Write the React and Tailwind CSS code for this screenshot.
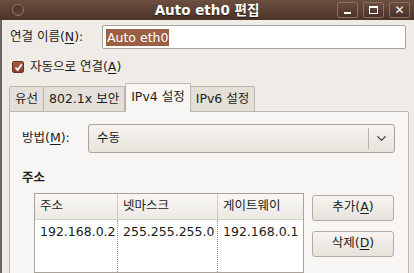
import { ChevronDown } from 'lucide-react'

const FONT = { fontFamily: '"DejaVu Sans", "Noto Sans CJK KR", sans-serif' }

function U({ children }) {
  return <span className="underline underline-offset-2">{children}</span>
}

function WinButton({ children }) {
  return (
    <div className="w-[21px] h-[16px] rounded-[2px] border border-[#8a6e60] bg-gradient-to-b from-[#6a4c3e] to-[#4a3127] flex items-center justify-center text-white">
      {children}
    </div>
  )
}

function Tab({ label, active }) {
  if (active) {
    return (
      <div className="h-[29px] px-[5px] pt-[4px] bg-[#f7f6f4] border border-b-0 border-[#bcb6ae] rounded-t-[2px] -mb-px relative z-10 text-[12.5px] text-[#1c1c1c]">
        {label}
      </div>
    )
  }
  return (
    <div className="h-[25px] px-[5px] pt-[3px] bg-[#e4dfd9] border border-b-0 border-[#bcb6ae] rounded-t-[2px] text-[12.5px] text-[#1c1c1c] -ml-px first:ml-0">
      {label}
    </div>
  )
}

function SideButton({ children }) {
  return (
    <div className="w-[82px] h-[26px] rounded-[3px] border border-[#b3aca4] bg-gradient-to-b from-[#f7f5f2] to-[#e6e1db] flex items-center justify-center text-[12.5px] text-[#1c1c1c]">
      {children}
    </div>
  )
}

export default function App() {
  return (
    <div className="w-[414px] h-[273px] overflow-hidden bg-[#efebe7] text-[#1c1c1c]" style={FONT}>
      <div className="h-[20px] bg-gradient-to-b from-[#6d4f40] to-[#4b3328] flex items-center relative">
        <div className="ml-[12px] w-[12px] h-[12px] rounded-full border border-[#8f7566] bg-gradient-to-b from-[#4e362b] to-[#5e4436]" />
        <div className="absolute inset-0 flex items-center justify-center text-white font-bold text-[13.5px] [text-shadow:0_1px_1px_rgba(0,0,0,0.6)]">
          Auto eth0 편집
        </div>
        <div className="ml-auto mr-[4px] flex gap-[5px]">
          <WinButton>
            <div className="w-[7px] h-[2px] bg-white mt-[6px]" />
          </WinButton>
          <WinButton>
            <div className="w-[9px] h-[8px] border-[1.5px] border-white border-t-[2.5px]" />
          </WinButton>
          <WinButton>
            <span className="text-[12px] font-bold leading-none">✕</span>
          </WinButton>
        </div>
      </div>

      <div className="border-l-2 border-[#6b6561] h-[253px]">
        <div className="flex items-center pt-[5px] pl-[8px]">
          <div className="w-[92px] text-[12.5px]">연결 이름(<U>N</U>):</div>
          <div className="w-[304px] h-[24px] bg-white border border-[#a8a29a] rounded-[2px] flex items-center pl-[3px]">
            <span className="bg-[#9b5f45] text-white text-[12.5px] leading-[17px] px-[1px]">Auto eth0</span>
          </div>
        </div>

        <div className="flex items-center mt-[9px] pl-[10px] gap-[6px]">
          <div className="w-[12px] h-[12px] rounded-[2px] bg-gradient-to-b from-[#a85b3c] to-[#8a4427] border border-[#6c3520] flex items-center justify-center">
            <svg width="9" height="9" viewBox="0 0 9 9">
              <path d="M1.5 4.5 L3.6 7 L7.8 1.2" fill="none" stroke="white" strokeWidth="1.8" />
            </svg>
          </div>
          <div className="text-[12.5px]">자동으로 연결(<U>A</U>)</div>
        </div>

        <div className="ml-[7px] mt-[6px] flex items-end">
          <Tab label="유선" />
          <Tab label="802.1x 보안" />
          <Tab label="IPv4 설정" active />
          <Tab label="IPv6 설정" />
        </div>

        <div className="ml-[7px] w-[400px] h-[170px] bg-[#f7f6f4] border border-[#bcb6ae] rounded-tr-[2px] px-[12px]">
          <div className="flex items-center mt-[12px]">
            <div className="w-[66px] text-[12.5px]">방법(<U>M</U>):</div>
            <div className="w-[307px] h-[29px] rounded-[3px] border border-[#aaa39b] bg-gradient-to-b from-[#f6f4f1] to-[#e8e3dd] flex items-center">
              <span className="pl-[8px] text-[12.5px] flex-1">수동</span>
              <div className="w-px h-[21px] bg-[#b9b2aa]" />
              <ChevronDown size={15} strokeWidth={2} className="mx-[5px] text-[#3c3c3c]" />
            </div>
          </div>

          <div className="mt-[16px] font-bold text-[12.5px]">주소</div>

          <div className="flex mt-[5px] pl-[12px]">
            <div className="w-[270px] h-[80px] bg-white border border-[#a8a29a]">
              <div className="flex h-[26px] bg-gradient-to-b from-[#f8f7f5] to-[#ece9e5] border-b border-[#d6d1cb] text-[12.5px]">
                <div className="w-[83px] pl-[5px] flex items-center border-r border-[#cfc9c2]">주소</div>
                <div className="w-[100px] pl-[5px] flex items-center border-r border-[#cfc9c2]">넷마스크</div>
                <div className="flex-1 pl-[5px] flex items-center">게이트웨이</div>
              </div>
              <div className="flex h-[54px] text-[12.5px]">
                <div className="w-[83px] pl-[5px] pt-[3px] border-r border-dotted border-[#9a9590] whitespace-nowrap">192.168.0.2</div>
                <div className="w-[100px] pl-[5px] pt-[3px] border-r border-dotted border-[#9a9590] whitespace-nowrap">255.255.255.0</div>
                <div className="flex-1 pl-[5px] pt-[3px] whitespace-nowrap">192.168.0.1</div>
              </div>
            </div>
            <div className="ml-[8px] mt-[2px] flex flex-col gap-[10px]">
              <SideButton>추가(<U>A</U>)</SideButton>
              <SideButton>삭제(<U>D</U>)</SideButton>
            </div>
          </div>
        </div>
      </div>
    </div>
  )
}
